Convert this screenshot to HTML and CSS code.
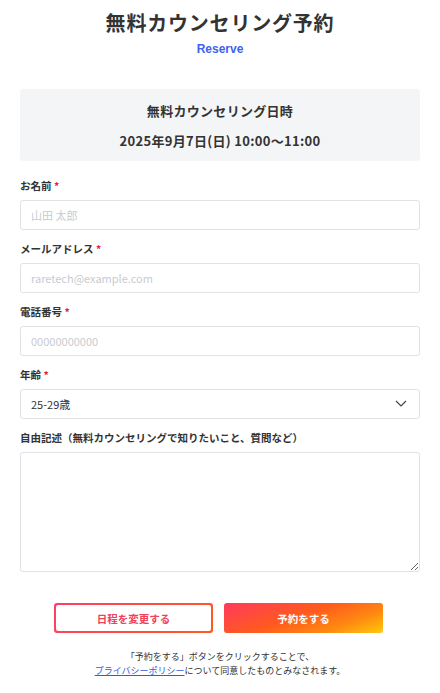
FILE: index.html
```html
<!DOCTYPE html>
<html lang="ja">
<head>
    <meta charset="UTF-8">
    <meta name="viewport" content="width=device-width, initial-scale=1.0">
    <title>無料カウンセリング予約</title>
    <link rel="stylesheet" href="styles.css">
</head>
<body>

    <div class="container">
        <h1 class="title">無料カウンセリング予約</h1>
        <p class="subtitle">Reserve</p>

        <div class="schedule">
            <p>無料カウンセリング日時</p>
            <p>2025年9月7日(日) 10:00〜11:00</p>
        </div>

        <form class="form">
            <label for="name">お名前 <span class="req">*</span></label>
            <input type="text" id="name" placeholder="山田 太郎">

            <label for="email">メールアドレス <span class="req">*</span></label>
            <input type="email" id="email" placeholder="raretech@example.com">

            <label for="phone">電話番号 <span class="req">*</span></label>
            <input type="tel" id="phone" placeholder="00000000000">

            <label for="age">年齢 <span class="req">*</span></label>
            <div class="select-wrap">
                <select id="age">
                    <option>25-29歳</option>
                </select>
                <svg class="chevron" width="12" height="7" viewBox="0 0 12 7">
                    <path d="M1 1l5 5 5-5" fill="none" stroke="#444" stroke-width="1.2"/>
                </svg>
            </div>

            <label for="memo">自由記述（無料カウンセリングで知りたいこと、質問など）</label>
            <textarea id="memo"></textarea>

            <div class="buttons">
                <button type="button" class="btn btn-outline"><span>日程を変更する</span></button>
                <button type="button" class="btn btn-primary">予約をする</button>
            </div>
        </form>

        <p class="note">「予約をする」ボタンをクリックすることで、<br><a href="#">プライバシーポリシー</a>について同意したものとみなされます。</p>
    </div>

</body>
</html>
```

FILE: styles.css
```css
body {
    margin: 0;
    font-family: "Noto Sans CJK JP", "Noto Sans", sans-serif;
    color: #333;
    background: #fff;
}
.container {
    width: 400px;
    margin: 0 auto;
    padding-top: 9px;
}
.title {
    margin: 0;
    text-align: center;
    font-size: 20px;
    line-height: 28px;
    font-weight: bold;
    letter-spacing: 0.8px;
    color: #333;
}
.subtitle {
    margin: 4px 0 0;
    text-align: center;
    font-family: "Liberation Sans", Arial, sans-serif;
    font-size: 12px;
    line-height: 16px;
    font-weight: bold;
    color: #3b63f0;
}
.schedule {
    margin-top: 32px;
    height: 72px;
    background: #f4f5f7;
    border-radius: 3px;
    display: flex;
    flex-direction: column;
    justify-content: center;
    gap: 11px;
    text-align: center;
}
.schedule p {
    margin: 0;
    font-size: 13px;
    line-height: 19px;
    font-weight: bold;
    letter-spacing: 0.3px;
}
.form {
    display: flex;
    flex-direction: column;
    margin-top: 17px;
}
.form label {
    font-size: 10.5px;
    line-height: 16px;
    font-weight: bold;
    margin-bottom: 6px;
}
.req {
    color: #e8174f;
}
.form input,
.form select,
.form textarea {
    box-sizing: border-box;
    width: 100%;
    height: 30px;
    margin: 0 0 11px;
    padding: 0 10px;
    border: 1px solid #dfe2e6;
    border-radius: 3px;
    font-family: inherit;
    font-size: 11px;
    color: #333;
    background: #fff;
}
.form input::placeholder {
    color: #c8cbd0;
}
.select-wrap {
    position: relative;
}
.form select {
    appearance: none;
}
.chevron {
    position: absolute;
    right: 13px;
    top: 11px;
    pointer-events: none;
}
.form textarea {
    height: 120px;
    padding: 8px 10px;
    margin-bottom: 31px;
    resize: vertical;
}
.buttons {
    display: flex;
    justify-content: center;
    gap: 11px;
    padding-right: 3px;
}
.btn {
    width: 159px;
    height: 30px;
    border-radius: 3px;
    font-family: inherit;
    font-size: 10.5px;
    font-weight: bold;
    cursor: pointer;
    border: none;
}
.btn-outline {
    padding: 2px;
    background: linear-gradient(135deg, #ff3d68, #ff5a1e);
}
.btn-outline span {
    display: flex;
    align-items: center;
    justify-content: center;
    height: 100%;
    background: #fff;
    border-radius: 2px;
    color: #f0405a;
}
.btn-primary {
    color: #fff;
    background: linear-gradient(160deg, #ff3a5e 0%, #ff5a1e 45%, #ff8a10 75%, #ffc90c 100%);
}
.note {
    margin: 17px 0 0;
    text-align: center;
    font-size: 9px;
    line-height: 14px;
    color: #333;
}
.note a {
    color: #2f5be0;
}
```
